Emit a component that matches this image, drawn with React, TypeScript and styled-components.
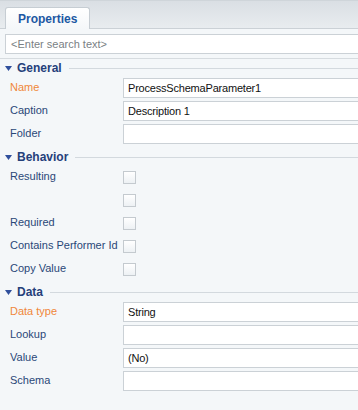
import { styled, createGlobalStyle } from "styled-components";

const GlobalStyle = createGlobalStyle`
  html, body {
    margin: 0;
    padding: 0;
    background: #f4f7f9;
  }
  body {
    font-family: "Liberation Sans", Arial, sans-serif;
    overflow: hidden;
  }
`;

const Panel = styled.div`
  width: 358px;
  height: 410px;
  overflow: hidden;
  background: #f4f7f9;
`;

const TabBar = styled.div`
  height: 29px;
  box-sizing: border-box;
  border-top: 1px solid #cfd5da;
  border-bottom: 1px solid #cbd1d6;
  background: linear-gradient(#dadfe4, #e8ecef);
  display: flex;
  align-items: flex-end;
  padding-left: 5px;
`;

const Tab = styled.div`
  height: 22px;
  margin-bottom: -1px;
  padding: 0 12px;
  box-sizing: border-box;
  border: 1px solid #c6cdd3;
  border-bottom: none;
  border-radius: 3px 3px 0 0;
  background: linear-gradient(#ffffff, #f4f7f9);
  color: #1c58a3;
  font-size: 12px;
  font-weight: bold;
  display: flex;
  align-items: center;
`;

const SearchArea = styled.div`
  padding: 5px 0 4px 5px;
  border-bottom: 1px solid #d6dbdf;
`;

const SearchInput = styled.input`
  display: block;
  width: 360px;
  height: 20px;
  box-sizing: border-box;
  border: 1px solid #cbd1d6;
  background: #fff;
  padding: 0 5px;
  font-family: "Liberation Sans", Arial, sans-serif;
  font-size: 11px;
  color: #333;
  outline: none;
  &::placeholder {
    color: #7a7f84;
  }
`;

const Section = styled.div`
  & + & {
    padding-top: 2px;
  }
`;

const SectionHeader = styled.div`
  height: 18px;
  display: flex;
  align-items: center;
  padding-left: 5px;
  gap: 5px;
  color: #25407a;
  font-size: 12px;
  font-weight: bold;
  &::after {
    content: "";
    flex: 1;
    height: 1px;
    margin-left: 2px;
    background: #d3d9de;
  }
`;

const Arrow = styled.svg`
  width: 7px;
  height: 5px;
  fill: #2f4f9c;
`;

const Row = styled.div`
  height: 23px;
  display: grid;
  grid-template-columns: 113px 1fr;
  align-items: start;
  padding-left: 10px;
`;

const Label = styled.span<{ $required?: boolean }>`
  font-size: 11px;
  line-height: 21px;
  color: ${(p) => (p.$required ? "#f0873a" : "#2a4778")};
  white-space: nowrap;
`;

const Field = styled.div`
  height: 20px;
  margin-top: 1px;
  box-sizing: border-box;
  margin-right: -3px;
  border: 1px solid #cbd1d6;
  background: #fff;
  padding-left: 4px;
  font-size: 11px;
  letter-spacing: -0.2px;
  color: #111;
  display: flex;
  align-items: center;
`;

const Check = styled.div`
  width: 13px;
  height: 13px;
  margin-top: 5px;
  box-sizing: border-box;
  border: 1px solid #c4cacf;
  background: linear-gradient(#ffffff, #edf1f4);
`;

type Item = { label: string; value?: string; required?: boolean; check?: boolean };

const sections: { title: string; items: Item[] }[] = [
  {
    title: "General",
    items: [
      { label: "Name", value: "ProcessSchemaParameter1", required: true },
      { label: "Caption", value: "Description 1" },
      { label: "Folder", value: "" },
    ],
  },
  {
    title: "Behavior",
    items: [
      { label: "Resulting", check: true },
      { label: "", check: true },
      { label: "Required", check: true },
      { label: "Contains Performer Id", check: true },
      { label: "Copy Value", check: true },
    ],
  },
  {
    title: "Data",
    items: [
      { label: "Data type", value: "String", required: true },
      { label: "Lookup", value: "" },
      { label: "Value", value: "(No)" },
      { label: "Schema", value: "" },
    ],
  },
];

export default function App() {
  return (
    <Panel>
      <GlobalStyle />
      <TabBar>
        <Tab>Properties</Tab>
      </TabBar>
      <SearchArea>
        <SearchInput placeholder="<Enter search text>" />
      </SearchArea>
      {sections.map((s) => (
        <Section key={s.title}>
          <SectionHeader>
            <Arrow viewBox="0 0 7 5">
              <path d="M0 0h7L3.5 5z" />
            </Arrow>
            {s.title}
          </SectionHeader>
          {s.items.map((it, i) => (
            <Row key={i}>
              <Label $required={it.required}>{it.label}</Label>
              {it.check ? <Check /> : <Field>{it.value}</Field>}
            </Row>
          ))}
        </Section>
      ))}
    </Panel>
  );
}
